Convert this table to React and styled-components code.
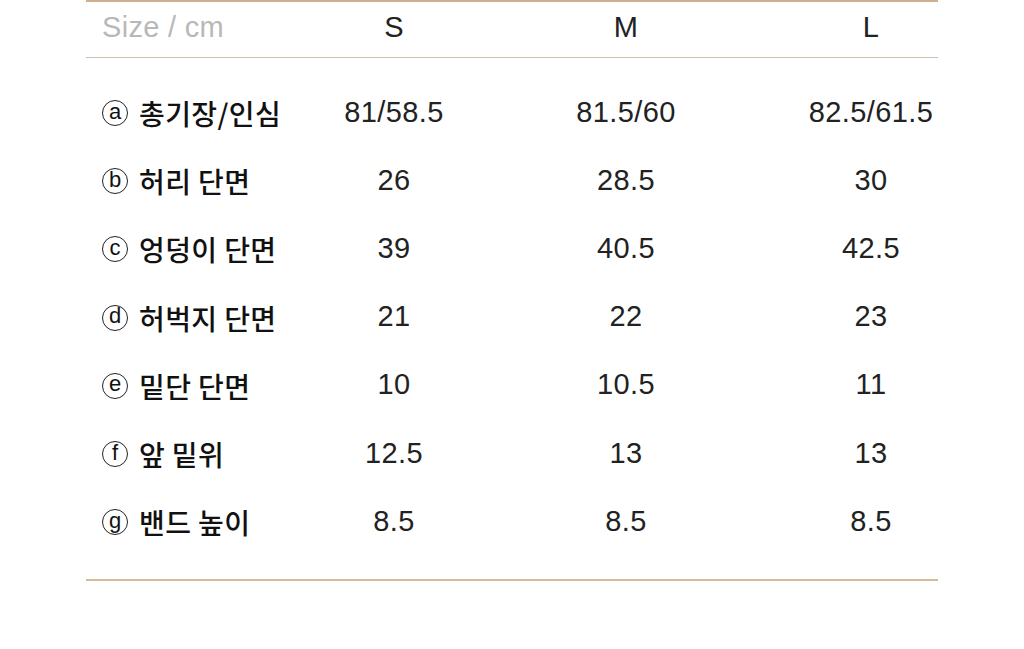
import React from "react";
import styled, { createGlobalStyle } from "styled-components";

const rows = [
  ["a", "총기장/인심", "81/58.5", "81.5/60", "82.5/61.5"],
  ["b", "허리 단면", "26", "28.5", "30"],
  ["c", "엉덩이 단면", "39", "40.5", "42.5"],
  ["d", "허벅지 단면", "21", "22", "23"],
  ["e", "밑단 단면", "10", "10.5", "11"],
  ["f", "앞 밑위", "12.5", "13", "13"],
  ["g", "밴드 높이", "8.5", "8.5", "8.5"],
];

const App = () => {
  return (
    <>
      <GlobalStyle />
      <Table>
        <Head>
          <HeadLabel>Size / cm</HeadLabel>
          <Cell>S</Cell>
          <Cell>M</Cell>
          <Cell>L</Cell>
        </Head>
        <Body>
          {rows.map((r) => (
            <Row key={r[0]}>
              <Label>
                <Mark>{r[0]}</Mark>
                {r[1]}
              </Label>
              <Cell>{r[2]}</Cell>
              <Cell>{r[3]}</Cell>
              <Cell>{r[4]}</Cell>
            </Row>
          ))}
        </Body>
      </Table>
    </>
  );
};

const GlobalStyle = createGlobalStyle`
  body {
    margin: 0;
    background: #fff;
    font-family: "Liberation Sans", "Noto Sans CJK KR", sans-serif;
  }
`;

const Table = styled.div`
  width: 852px;
  margin-left: 86px;
  border-top: 2px solid #cdb08e;
  border-bottom: 2px solid #d6bb98;
`;

const cols = `
  display: grid;
  grid-template-columns: 234px 148px 316px 174px;
  align-items: center;
`;

const Head = styled.div`
  ${cols}
  height: 51px;
  padding-bottom: 4px;
  border-bottom: 1px solid #cfc2b0;
`;

const Body = styled.div`
  padding: 20px 0 24px;
`;

const Row = styled.div`
  ${cols}
  height: 68.2px;
`;

const Cell = styled.div`
  text-align: center;
  font-family: "Liberation Sans", sans-serif;
  font-size: 29px;
  letter-spacing: 0.4px;
  line-height: 1;
  color: #222;
  white-space: nowrap;
`;

const HeadLabel = styled.div`
  padding-left: 16px;
  font-family: "Liberation Sans", sans-serif;
  font-size: 29px;
  line-height: 1;
  letter-spacing: 0.3px;
  color: #b8b8b8;
`;

const Label = styled.div`
  padding-left: 16px;
  font-family: "Noto Sans CJK KR", sans-serif;
  font-weight: 500;
  font-size: 28px;
  letter-spacing: 0.4px;
  line-height: 1;
  color: #111;
  white-space: nowrap;
  display: flex;
  align-items: center;
  gap: 11px;
  margin-top: 2px;
`;

const Mark = styled.span`
  box-sizing: border-box;
  flex: none;
  width: 26px;
  height: 26px;
  border: 1.5px solid #222;
  border-radius: 50%;
  display: inline-flex;
  align-items: center;
  justify-content: center;
  font-family: "Liberation Sans", sans-serif;
  font-weight: 400;
  font-size: 22px;
  line-height: 1;
  letter-spacing: 0;
  padding-bottom: 3px;
  color: #111;
`;

export default App;
